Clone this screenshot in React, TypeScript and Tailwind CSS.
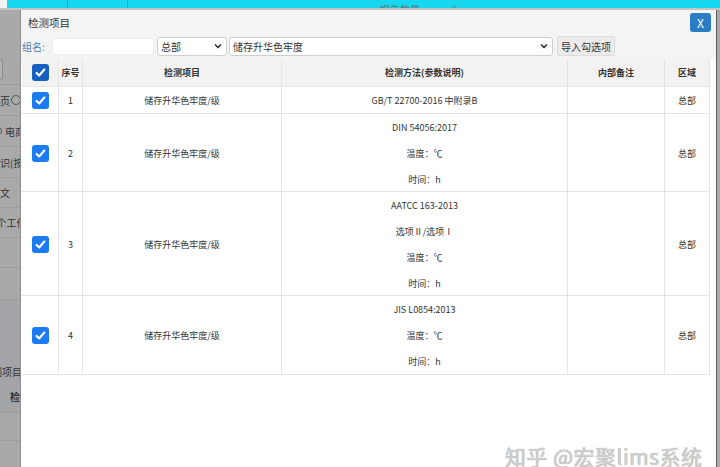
import React from "react";

function Check({ dark }: { dark?: boolean }) {
  return (
    <div
      className={
        dark
          ? "w-[17px] h-[17px] rounded-[3px] bg-[#1560c0] flex items-center justify-center"
          : "w-[17px] h-[17px] rounded-[3px] bg-[#1a7bf2] flex items-center justify-center"
      }
    >
      <svg width="13" height="13" viewBox="0 0 16 16">
        <path
          d="M3.2 8.6l3.1 3 6.4-7.2"
          fill="none"
          stroke="white"
          strokeWidth="2.7"
          strokeLinecap="round"
          strokeLinejoin="round"
        />
      </svg>
    </div>
  );
}

function Chevron() {
  return (
    <svg width="8" height="6" viewBox="0 0 8 6">
      <path d="M1 1.5l3 3 3-3" fill="none" stroke="#222" strokeWidth="1.4" />
    </svg>
  );
}

const rows = [
  { n: 1, lines: ["GB/T 22700-2016 中附录B"], h: "h-[27px]" },
  { n: 2, lines: ["DIN 54056:2017", "温度：℃", "时间：h"], h: "h-[78px]" },
  { n: 3, lines: ["AATCC 163-2013", "选项Ⅱ/选项Ⅰ", "温度：℃", "时间：h"], h: "h-[104px]" },
  { n: 4, lines: ["JIS L0854:2013", "温度：℃", "时间：h"], h: "h-[79px]" },
];

const cols = "grid grid-cols-[37px_24px_199px_286px_97px_45px]";
const cell = "border-r border-[#e4e4e4] flex items-center justify-center";

function Radio() {
  return <span className="inline-block w-[10px] h-[10px] rounded-full border border-[#555] shrink-0" />;
}

export default function App() {
  return (
    <div className="w-[720px] h-[467px] overflow-hidden bg-[#a9a9a9] flex flex-col font-['Noto_Sans_CJK_SC','Noto_Sans',sans-serif] text-[#333] relative">
      {/* top page bar */}
      <div className="h-[8px] shrink-0 flex overflow-hidden">
        <div className="w-[7px] bg-[#eef4f5]" />
        <div className="flex-1 bg-[#17d7ee] flex">
          <div className="w-[61px] border-r border-[#3b9fb0]" />
          <div className="w-[60px] border-r border-[#3b9fb0]" />
          <div className="flex-1 flex items-end pl-[252px] gap-[32px] text-[10px] leading-[10px] text-[#5a7a80] translate-y-[7px]">
            <span>报告数量</span>
            <span>0</span>
          </div>
        </div>
      </div>
      <div className="h-[2px] shrink-0 bg-[#c4c4c4]" />

      <div className="flex flex-1 min-h-0">
        {/* left page fragments */}
        <div className="w-[20px] shrink-0 overflow-hidden flex flex-col text-[10px] text-[#333] whitespace-nowrap">
          <div className="h-[45px] shrink-0" />
          <div className="h-[30px] shrink-0 flex items-center border-b border-[#9d9d9d]">
            <div className="w-[3px] h-[21px] border border-l-0 border-[#8d8d8d] rounded-r-[3px] bg-[#b2b2b2]" />
          </div>
          <div className="h-[31px] shrink-0 flex items-center gap-[1px] -ml-[10px] border-b border-[#9d9d9d]">
            <span>首页</span>
            <Radio />
          </div>
          <div className="h-[31px] shrink-0 flex items-center gap-[3px] -ml-[8px] border-b border-[#9d9d9d]">
            <Radio />
            <span>电商</span>
          </div>
          <div className="h-[31px] shrink-0 flex items-center -ml-[10px] border-b border-[#9d9d9d]">
            <span>标识(按键)</span>
          </div>
          <div className="h-[30px] shrink-0 flex items-center -ml-[10px] border-b border-[#9d9d9d]">
            <span>中文</span>
          </div>
          <div className="h-[30px] shrink-0 flex items-center -ml-[9px] border-b border-[#9d9d9d]">
            <span>8个工作日</span>
          </div>
          <div className="h-[30px] shrink-0 border-b border-[#9d9d9d]" />
          <div className="h-[32px] shrink-0 border-b border-[#9d9d9d]" />
          <div className="h-[81px] shrink-0 bg-[#a2a4a7] flex items-end pb-[2px] -ml-[18px]">
            <span>检测项目</span>
          </div>
          <div className="h-[32px] shrink-0 bg-[#a2a4a7] flex items-center justify-end font-bold border-b border-[#9a9a9a]">
            <span>检</span>
          </div>
          <div className="h-[28px] shrink-0 border-b border-[#9d9d9d]" />
        </div>

        {/* dialog */}
        <div className="flex-1 min-w-0 flex flex-col border-l border-[#8e8e8e] bg-white">
          <div className="bg-[#f4f4f4] shrink-0">
            <div className="h-[25px] flex items-center justify-between pl-[7px] pr-[5px]">
              <span className="text-[10.5px] text-[#333]">检测项目</span>
              <div className="w-[21px] h-[19px] rounded-[3px] bg-[#2a7dc4] text-white text-[12px] flex items-center justify-center">
                X
              </div>
            </div>
            <div className="h-[22px] flex items-center pl-[1px] text-[10px]">
              <span className="w-[30px] text-[#4c7fbc]">组名:</span>
              <div className="w-[102px] h-[17px] bg-white border border-[#ececec] rounded-[2px]" />
              <div className="ml-[3px] w-[70px] h-[19px] bg-white border border-[#cfcfcf] rounded-[3px] flex items-center justify-between pl-[3px] pr-[4px]">
                <span>总部</span>
                <Chevron />
              </div>
              <div className="ml-[2px] w-[324px] h-[19px] bg-white border border-[#cfcfcf] rounded-[3px] flex items-center justify-between pl-[3px] pr-[4px]">
                <span>储存升华色牢度</span>
                <Chevron />
              </div>
              <div className="ml-[4px] w-[58px] h-[20px] bg-[#ececec] border border-[#dcdcdc] rounded-[2px] flex items-center justify-center">
                导入勾选项
              </div>
            </div>
            <div className="h-[2px]" />
          </div>

          <div className="flex-1 pl-[1px] bg-white">
            <div className="w-[688px] text-[9px]">
              <div className={`${cols} h-[28px] bg-[#f2f2f2] border-b border-[#e4e4e4] font-bold`}>
                <div className={cell}>
                  <Check dark />
                </div>
                <div className={cell}>序号</div>
                <div className={cell}>检测项目</div>
                <div className={cell}>检测方法(参数说明)</div>
                <div className={cell}>内部备注</div>
                <div className={cell}>区域</div>
              </div>
              {rows.map((r) => (
                <div key={r.n} className={`${cols} ${r.h} border-b border-[#e4e4e4] bg-white`}>
                  <div className={cell}>
                    <Check />
                  </div>
                  <div className={cell}>{r.n}</div>
                  <div className={cell}>储存升华色牢度/级</div>
                  <div className={`${cell} flex-col pt-[1px]`}>
                    {r.lines.map((l, i) => (
                      <div key={i} className="leading-[26px] h-[26px] shrink-0">
                        {l}
                      </div>
                    ))}
                  </div>
                  <div className={cell} />
                  <div className={cell}>总部</div>
                </div>
              ))}
            </div>
          </div>
        </div>

        <div className="w-[4px] shrink-0 border-l border-[#5f5f5f] bg-[#a9a9a9]" />
      </div>

      {/* watermark */}
      <div className="absolute left-[505px] top-[443px] text-[21px] leading-[26px] tracking-[0.5px] whitespace-nowrap text-[#d0d0d0] [text-shadow:0_0_1px_#8a8a8a]">
        知乎 @宏聚lims系统
      </div>
    </div>
  );
}
